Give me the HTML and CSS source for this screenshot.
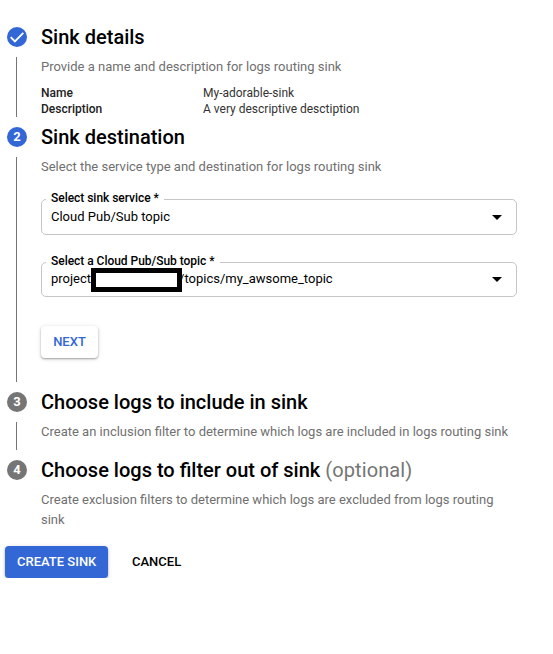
FILE: index.html
```html
<!DOCTYPE html>
<html lang="en">
<head>
<meta charset="utf-8">
<title>Create logs routing sink</title>
<link rel="stylesheet" href="styles.css">
</head>
<body>
<main class="stepper">
  <section class="step step-details">
    <div class="rail">
      <svg class="badge-check" viewBox="0 0 20 20" width="20" height="20"><circle cx="10" cy="10" r="10" fill="#3367d6"/><path d="M3.7 10.2l4.2 4.2 8.4-8.6" fill="none" stroke="#fff" stroke-width="1.8"/></svg>
      <span class="line"></span>
    </div>
    <div class="content">
      <h2>Sink details</h2>
      <p class="hint">Provide a name and description for logs routing sink</p>
      <dl class="summary">
        <dt>Name</dt><dd>My-adorable-sink</dd>
        <dt>Description</dt><dd>A very descriptive desctiption</dd>
      </dl>
    </div>
  </section>
  <section class="step step-destination">
    <div class="rail"><span class="badge active">2</span><span class="line"></span></div>
    <div class="content">
      <h2>Sink destination</h2>
      <p class="hint">Select the service type and destination for logs routing sink</p>
      <div class="field field-service">
        <span class="label">Select sink service *</span>
        <span class="value">Cloud Pub/Sub topic</span>
        <span class="caret"></span>
      </div>
      <div class="field field-topic">
        <span class="label">Select a Cloud Pub/Sub topic *</span>
        <span class="value">project<span class="redacted"></span><span class="path">/topics/my_awsome_topic</span></span>
        <span class="caret"></span>
      </div>
      <button class="btn next">NEXT</button>
    </div>
  </section>
  <section class="step step-include">
    <div class="rail"><span class="badge">3</span><span class="line"></span></div>
    <div class="content">
      <h2>Choose logs to include in sink</h2>
      <p class="hint">Create an inclusion filter to determine which logs are included in logs routing sink</p>
    </div>
  </section>
  <section class="step step-exclude">
    <div class="rail"><span class="badge">4</span></div>
    <div class="content">
      <h2>Choose logs to filter out of sink <span class="optional">(optional)</span></h2>
      <p class="hint">Create exclusion filters to determine which logs are excluded from logs routing sink</p>
    </div>
  </section>
</main>
<footer class="actions">
  <button class="btn primary">CREATE SINK</button>
  <button class="btn text">CANCEL</button>
</footer>
</body>
</html>
```
FILE: styles.css
```css
* { box-sizing: border-box; }
body {
  margin: 0;
  background: #fff;
  color: #000;
  font-family: Roboto, "Liberation Sans", sans-serif;
}
.stepper { padding: 27px 36px 0 7px; }
.step { display: flex; gap: 14px; }
.step-details { height: 100px; }
.step-destination { height: 265px; }
.step-include { height: 68px; }
.step-exclude { height: 86px; }
.rail {
  width: 20px;
  flex: none;
  display: flex;
  flex-direction: column;
}
.badge-check { display: block; flex: none; }
.badge {
  width: 20px;
  height: 20px;
  flex: none;
  border-radius: 50%;
  background: #757575;
  color: #fff;
  font-size: 13px;
  font-weight: 700;
  line-height: 20px;
  text-align: center;
}
.badge.active { background: #3367d6; }
.line { width: 1px; flex: 1; margin: 10px 0 10px 9px; background: #757575; }
.content { flex: 1; min-width: 0; }
h2 {
  margin: 0;
  font-size: 20px;
  font-weight: 500;
  line-height: 20px;
  white-space: nowrap;
}
.optional { color: #757575; font-weight: 400; letter-spacing: 0.1px; }
.hint {
  margin: 10px 0 0;
  width: 476px;
  font-size: 13px;
  line-height: 20px;
  color: #707070;
}
.summary {
  margin: 8px 0 0;
  display: grid;
  grid-template-columns: 162px 1fr;
  font-size: 12px;
  line-height: 16px;
  color: #212121;
}
.summary dt { font-weight: 500; }
.summary dd { margin: 0; color: #333; }
.field {
  position: relative;
  width: 476px;
  display: flex;
  align-items: center;
  justify-content: space-between;
  padding: 0 14px 0 9px;
  border: 1px solid #c6c6c6;
  border-radius: 5px;
}
.field-service { margin-top: 22px; height: 36px; }
.field-topic { margin-top: 27px; height: 35px; padding-bottom: 1px; }
.label {
  position: absolute;
  left: 4px;
  top: -10px;
  padding: 0 5px;
  background: #fff;
  font-size: 12px;
  font-weight: 500;
  line-height: 16px;
  letter-spacing: -0.03px;
}
.value {
  display: flex;
  align-items: center;
  font-size: 13px;
  line-height: 20px;
}
.field-topic .value { margin-top: -1px; }
.redacted {
  position: relative;
  width: 91px;
  height: 24px;
  margin: 1px 0 -1px;
  border: 5px solid #000;
  background: #fff;
}
.path { margin-left: -3px; }
.caret { border: 5px solid transparent; border-top-color: #000; border-bottom: 0; }
.btn {
  border: 0;
  border-radius: 4px;
  padding: 0 12px;
  height: 32px;
  font: 500 13px/32px Roboto, "Liberation Sans", sans-serif;
  white-space: nowrap;
}
.next {
  display: block;
  width: 57px;
  margin-top: 29px;
  background: #fff;
  color: #3367d6;
  box-shadow: 0 1px 2px rgba(0,0,0,.32), 0 1px 5px rgba(0,0,0,.12);
}
.actions { display: flex; gap: 12px; padding-left: 5px; }
.primary {
  width: 103px;
  background: #3367d6;
  color: #fff;
  box-shadow: 0 1px 2px rgba(0,0,0,.32), 0 1px 5px rgba(0,0,0,.12);
}
.text { background: transparent; color: #000; }
```
